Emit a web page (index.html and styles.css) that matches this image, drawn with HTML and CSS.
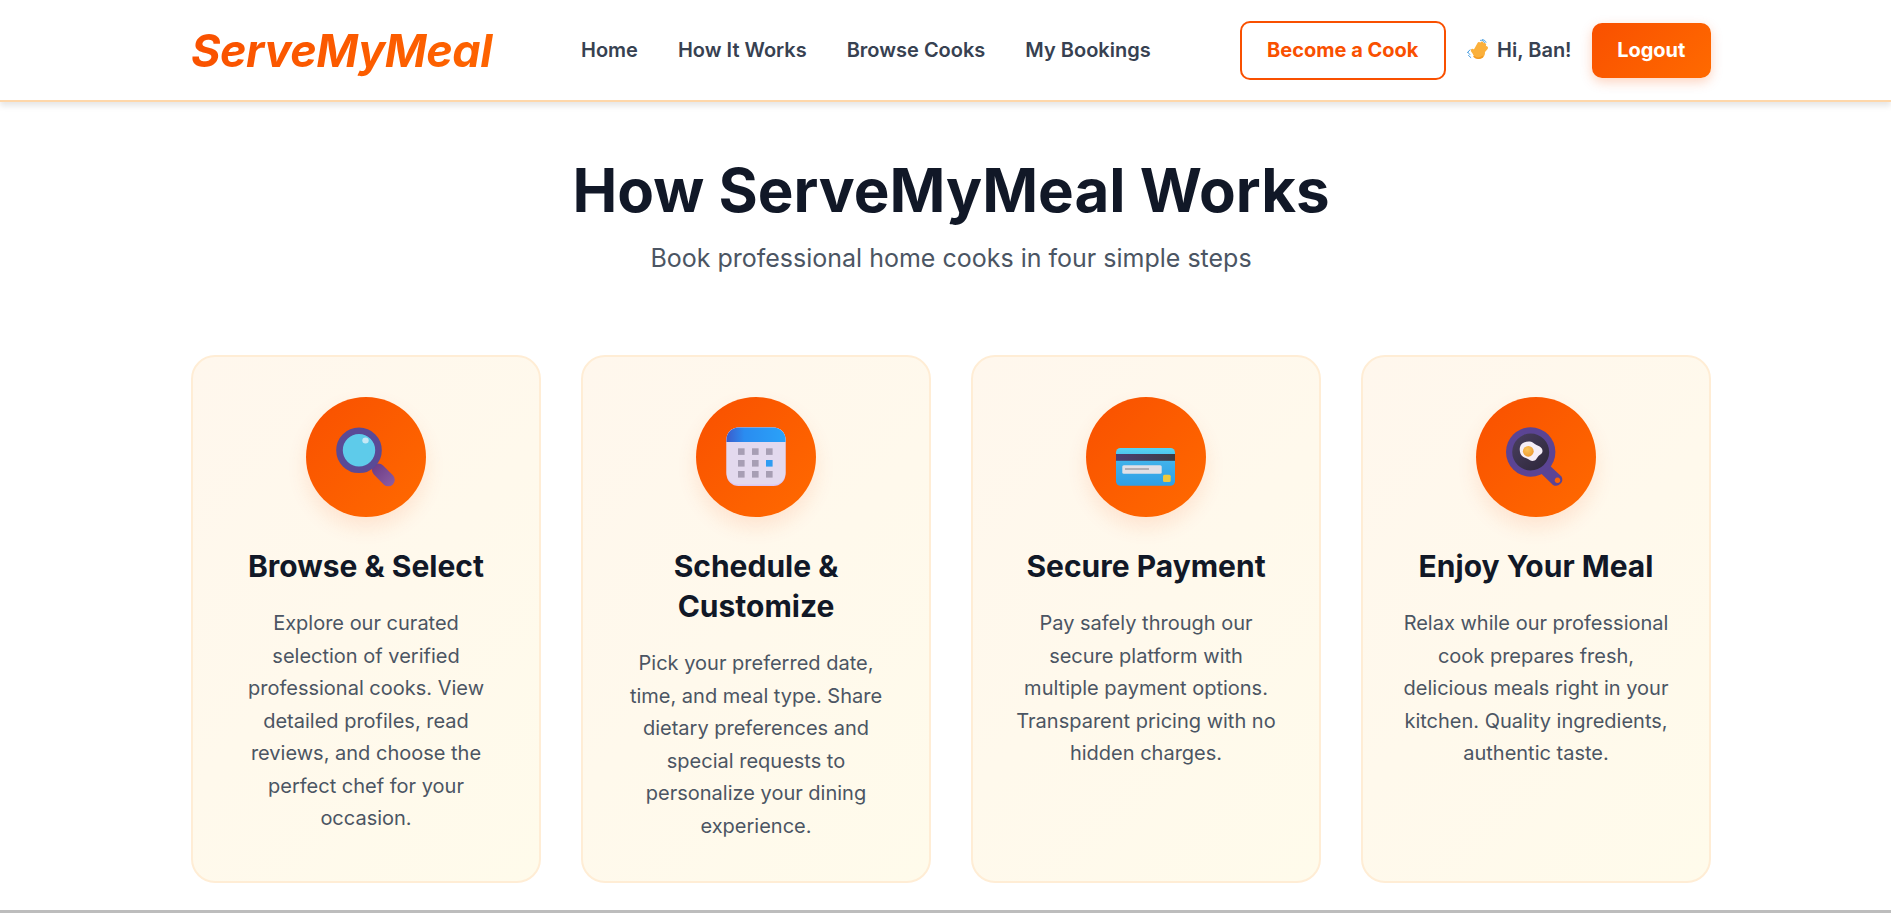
FILE: index.html
```html
<!DOCTYPE html>
<html lang="en">
<head>
<meta charset="utf-8">
<title>ServeMyMeal</title>
<link rel="stylesheet" href="styles.css">
</head>
<body>
<header class="nav">
  <div class="wrap nav-inner">
    <a class="logo">ServeMyMeal</a>
    <nav class="links">
      <a>Home</a><a>How It Works</a><a>Browse Cooks</a><a>My Bookings</a>
    </nav>
    <div class="actions">
      <a class="btn-outline">Become a Cook</a>
      <span class="greet">
        <svg class="wave" viewBox="0 0 22 22" aria-hidden="true">
          <g fill="none" stroke="#fbb03b" stroke-width="3.400" stroke-linecap="round">
            <path d="M8 12 12 4.800M10.500 12 15 4.200M13 13 17.500 5.800M15 14 19.300 8.800M8 15 5.500 11.500"/>
          </g>
          <circle cx="12" cy="14" r="6" fill="#fbb03b"/>
          <path d="M7 17.500c2 2 6 2.500 8.500 0" fill="none" stroke="#f39a22" stroke-width="1.500" stroke-linecap="round"/>
          <path d="M.8 13.200 2.800 15.500M3 10.800.6 13.500M1.500 16.500l2.300 2" fill="none" stroke="#4a9fe0" stroke-width="1" stroke-linecap="round"/>
          <path d="M13.500 1.300c1.700-.3 3.400.5 4 2.100M15.500.6c1.800.2 3 1.200 3.500 2.700" fill="none" stroke="#4a9fe0" stroke-width="1" stroke-linecap="round"/>
        </svg>
        Hi, Ban!
      </span>
      <a class="btn-solid">Logout</a>
    </div>
  </div>
</header>

<main class="wrap">
  <section class="hero">
    <h1>How ServeMyMeal Works</h1>
    <p>Book professional home cooks in four simple steps</p>
  </section>

  <section class="steps">
    <article class="card">
      <div class="badge">
        <svg class="emoji" viewBox="0 0 60 60" aria-hidden="true">
          <defs>
            <linearGradient id="handle" gradientUnits="userSpaceOnUse" x1="38" y1="38" x2="58" y2="58"><stop offset="0" stop-color="#6c3d86"/><stop offset="1" stop-color="#8c5ca2"/></linearGradient>
          </defs>
          <path d="M42.500 43 52.300 52.800" stroke="url(#handle)" stroke-width="13" stroke-linecap="round"/>
          <circle cx="23" cy="23.300" r="19.500" fill="#5ecbea" stroke="#5a4a96" stroke-width="6.600"/>
          <ellipse cx="29.500" cy="13.500" rx="3.200" ry="3" fill="#c5e8f5"/>
        </svg>
      </div>
      <h2>Browse &amp; Select</h2>
      <p>Explore our curated selection of verified professional cooks. View detailed profiles, read reviews, and choose the perfect chef for your occasion.</p>
    </article>

    <article class="card">
      <div class="badge">
        <svg class="emoji" viewBox="0 0 60 60" aria-hidden="true">
          <defs>
            <linearGradient id="calTop" x1="0" y1="0" x2="1" y2="0"><stop offset="0" stop-color="#3c5ccc"/><stop offset=".3" stop-color="#2a8cf0"/><stop offset="1" stop-color="#2aa2f8"/></linearGradient>
          </defs>
          <rect x="0.500" y="0.500" width="59" height="58.500" rx="12" fill="#dcc8f2"/>
          <rect x="0.500" y="0.500" width="59" height="57" rx="12" fill="#e3d9ee"/>
          <path d="M.5 15V12.500a12 12 0 0 1 12-12h35a12 12 0 0 1 12 12V15z" fill="url(#calTop)"/>
          <g fill="#a79eb4">
            <rect x="12" y="21.300" width="6.600" height="6.600"/><rect x="26" y="21.300" width="6.600" height="6.600"/><rect x="40" y="21.300" width="6.600" height="6.600"/>
            <rect x="12" y="33" width="6.600" height="6.600"/><rect x="26" y="33" width="6.600" height="6.600"/>
            <rect x="12" y="44" width="6.600" height="6.600"/><rect x="26" y="44" width="6.600" height="6.600"/><rect x="40" y="44" width="6.600" height="6.600"/>
          </g>
          <rect x="40" y="33" width="6.600" height="6.600" fill="#2f9cf2"/>
        </svg>
      </div>
      <h2>Schedule &amp; Customize</h2>
      <p>Pick your preferred date, time, and meal type. Share dietary preferences and special requests to personalize your dining experience.</p>
    </article>

    <article class="card">
      <div class="badge">
        <svg class="emoji" viewBox="0 0 60 60" aria-hidden="true">
          <defs>
            <linearGradient id="cardBody" x1="0" y1="0" x2="0" y2="1"><stop offset="0" stop-color="#58d4f2"/><stop offset=".4" stop-color="#3fb0ea"/><stop offset="1" stop-color="#2f9fe6"/></linearGradient>
            <linearGradient id="stripe" x1="0" y1="0" x2="1" y2="0"><stop offset="0" stop-color="#4c3f74"/><stop offset="1" stop-color="#3c3c44"/></linearGradient>
          </defs>
          <rect x="0" y="21" width="59" height="37.700" rx="4.500" fill="url(#cardBody)"/>
          <rect x="0" y="27" width="59" height="6.800" fill="url(#stripe)"/>
          <rect x="6.300" y="38.300" width="39.400" height="8.400" rx="1.500" fill="#e2e0e6"/>
          <rect x="9" y="41.200" width="24" height="1.600" fill="#a5a3aa"/>
          <rect x="47" y="47.700" width="7.700" height="7.400" rx="1.500" fill="#f0c93c"/>
        </svg>
      </div>
      <h2>Secure Payment</h2>
      <p>Pay safely through our secure platform with multiple payment options. Transparent pricing with no hidden charges.</p>
    </article>

    <article class="card">
      <div class="badge">
        <svg class="emoji" viewBox="0 0 60 60" aria-hidden="true">
          <defs>
            <radialGradient id="yolk" cx=".4" cy=".35" r=".7"><stop offset="0" stop-color="#fbc45a"/><stop offset="1" stop-color="#ee9a32"/></radialGradient>
            <linearGradient id="pan" x1="0" y1="0" x2="1" y2="1"><stop offset="0" stop-color="#4a3f60"/><stop offset="1" stop-color="#2c2638"/></linearGradient>
          </defs>
          <path fill-rule="evenodd" fill="#5b4494" d="M41 36 55.500 49.500a6.300 6.300 0 0 1-8.500 8.500L33 44.500zM51.500 50.500a2.800 2.800 0 1 0 .01 0z"/>
          <circle cx="24.700" cy="25" r="24.700" fill="#5b4494"/>
          <circle cx="24.700" cy="25" r="18.500" fill="url(#pan)"/>
          <path fill="#f6eef8" d="M14 20c1-4 6-6 10-5.500 3 .4 4 2.500 6.500 3.500 3 1.200 6 2.500 6 6 0 3-2.500 3.500-4 5-1.500 1.800-2.500 5-6 5-2 0-3-1.500-5-2.300-2.500-1-6-2-7-5-.8-2.300-1-4.500-.5-6.700z"/>
          <circle cx="22.300" cy="24.300" r="5.400" fill="url(#yolk)"/>
        </svg>
      </div>
      <h2>Enjoy Your Meal</h2>
      <p>Relax while our professional cook prepares fresh, delicious meals right in your kitchen. Quality ingredients, authentic taste.</p>
    </article>
  </section>
</main>
<div class="rule"></div>
</body>
</html>
```

FILE: styles.css
```css
* { box-sizing: border-box; }
html, body { margin: 0; padding: 0; }
body {
  font-family: Inter, "Liberation Sans", sans-serif;
  background: #fff;
  color: #111827;
  overflow-x: hidden;
}
.wrap { width: 1520px; margin-left: 191px; }

.nav {
  height: 102px;
  background: #fff;
  border-bottom: 2px solid #fed7aa;
  box-shadow: 0 4px 6px rgba(0, 0, 0, .1);
}
.nav-inner { display: flex; align-items: center; height: 100px; }
.logo {
  font-size: 45px;
  font-weight: 700;
  font-style: italic;
  letter-spacing: -0.5px;
  background: linear-gradient(135deg, #f95000, #ff6a00);
  -webkit-background-clip: text;
  background-clip: text;
  color: transparent;
  width: 390px;
}
.links { display: flex; gap: 40px; }
.links a { font-size: 20px; font-weight: 600; color: #374151; }
.actions { margin-left: auto; display: flex; align-items: center; gap: 20px; }
.btn-outline {
  border: 2px solid #f95000;
  border-radius: 10px;
  color: #f95000;
  font-size: 20px;
  font-weight: 700;
  padding: 14px 25.600px;
  line-height: 27px;
}
.btn-solid {
  background: linear-gradient(135deg, #f95000, #ff6a00);
  color: #fff;
  border-radius: 10px;
  font-size: 20px;
  font-weight: 700;
  padding: 14px 25.600px;
  line-height: 27px;
  box-shadow: 0 4px 12px rgba(249, 80, 0, .25);
}
.greet {
  display: flex;
  align-items: center;
  gap: 8px;
  padding-left: 1px;
  font-size: 20px;
  font-weight: 600;
  color: #374151;
}
.wave { width: 22px; height: 22px; }

.hero { text-align: center; padding-top: 50px; }
.hero h1 {
  margin: 0;
  font-size: 60px;
  font-weight: 700;
  line-height: 77px;
  color: #111827;
}
.hero p {
  margin: 11px 0 0;
  font-size: 25px;
  line-height: 36px;
  color: #4b5563;
}

.steps {
  margin-top: 79px;
  display: grid;
  grid-template-columns: repeat(4, 1fr);
  gap: 40px;
}
.card {
  height: 528px;
  padding: 40px;
  background: linear-gradient(135deg, #fff7ed, #fffbeb);
  border: 2px solid #ffedd5;
  border-radius: 24px;
  text-align: center;
}
.badge {
  width: 120px;
  height: 120px;
  margin: 0 auto 29px;
  border-radius: 50%;
  background: linear-gradient(135deg, #f95000, #ff6a00);
  box-shadow: 0 10px 20px rgba(249, 80, 0, .12);
  display: flex;
  align-items: center;
  justify-content: center;
}
.emoji { width: 60px; height: 60px; display: block; overflow: visible; }
.card h2 {
  margin: 0 0 21px;
  font-size: 30px;
  font-weight: 700;
  line-height: 40px;
  color: #111827;
}
.card p {
  margin: 0;
  font-size: 20px;
  line-height: 32.500px;
  color: #4b5563;
}

.rule { margin-top: 27px; height: 3px; background: #bdbdbd; }
```
